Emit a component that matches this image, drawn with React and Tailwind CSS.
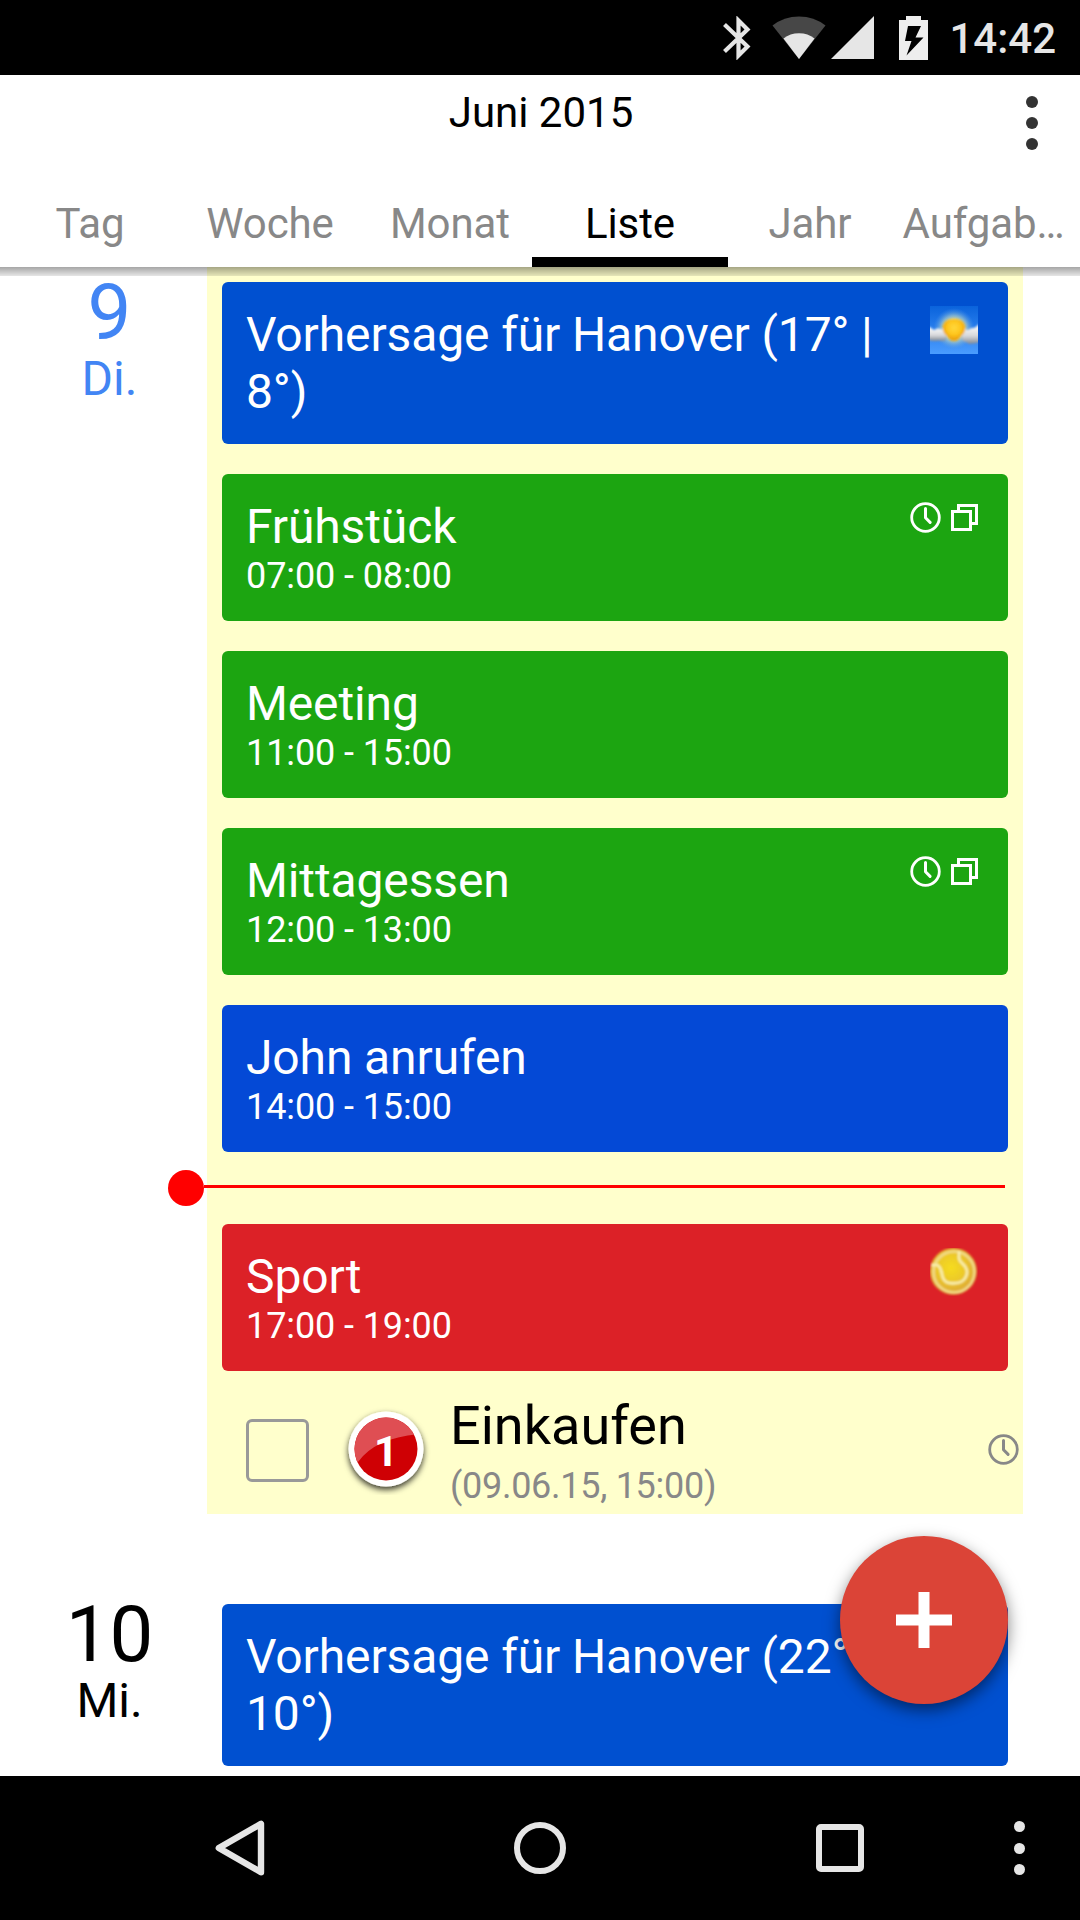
import clsx from "clsx";

const tabs = ["Tag", "Woche", "Monat", "Liste", "Jahr", "Aufgab…"];

const todayEvents = [
  { id: 1, title: "Vorhersage für Hanover (17° | 8°)", color: "bg-[#0050d0]", icon: "weather" },
  { id: 2, title: "Frühstück", time: "07:00 - 08:00", color: "bg-[#1ca511]", icon: "repeat" },
  { id: 3, title: "Meeting", time: "11:00 - 15:00", color: "bg-[#1ca511]" },
  { id: 4, title: "Mittagessen", time: "12:00 - 13:00", color: "bg-[#1ca511]", icon: "repeat" },
  { id: 5, title: "John anrufen", time: "14:00 - 15:00", color: "bg-[#0449d6]" },
];

const laterEvents = [
  { id: 6, title: "Sport", time: "17:00 - 19:00", color: "bg-[#dc2127]", icon: "tennis" },
];

const tomorrowEvents = [
  { id: 7, title: "Vorhersage für Hanover (22° | 10°)", color: "bg-[#0050d0]" },
];

const ClockIcon = ({ className }) => (
  <svg viewBox="0 0 31 31" className={clsx("size-[31px]", className)} fill="none" stroke="currentColor">
    <circle cx="15.5" cy="15.5" r="13.8" strokeWidth="2.8" />
    <path d="M15.5 6.5v9.3l4.6 4.6" strokeWidth="3" strokeLinecap="round" strokeLinejoin="round" />
  </svg>
);

const CopyIcon = () => (
  <svg viewBox="0 0 27 27" className="size-[27px]" fill="none" stroke="currentColor" strokeWidth="3">
    <path d="M1.5 7.5h18v18h-18z" />
    <path d="M7.5 7.5v-6h18v18h-6" />
  </svg>
);

const WeatherIcon = () => (
  <svg viewBox="0 0 48 48" className="size-12">
    <defs>
      <linearGradient id="sky" x1="0" y1="0" x2="0" y2="1">
        <stop offset="0" stopColor="#0a63dc" />
        <stop offset="1" stopColor="#4a9cff" />
      </linearGradient>
      <radialGradient id="glow">
        <stop offset="0.45" stopColor="#d8d8a0" />
        <stop offset="0.65" stopColor="#8fbcd0" stopOpacity="0.8" />
        <stop offset="1" stopColor="#3a8cf0" stopOpacity="0" />
      </radialGradient>
      <linearGradient id="cloud" x1="0" y1="0" x2="0" y2="1">
        <stop offset="0" stopColor="#ffffff" />
        <stop offset="0.6" stopColor="#d6d7da" />
        <stop offset="1" stopColor="#7d8794" />
      </linearGradient>
      <radialGradient id="sun" cy="0.4">
        <stop offset="0" stopColor="#ffd83c" />
        <stop offset="0.65" stopColor="#fec51c" />
        <stop offset="1" stopColor="#eda30e" />
      </radialGradient>
      <filter id="soft">
        <feGaussianBlur stdDeviation="0.8" />
      </filter>
      <clipPath id="frame">
        <path d="M0 0h48v48H0z" />
      </clipPath>
    </defs>
    <g clipPath="url(#frame)">
      <path d="M0 0h48v48H0z" fill="url(#sky)" />
      <circle cx="24" cy="23" r="21" fill="url(#glow)" />
      <g filter="url(#soft)">
        <path d="M-2 21c3 0 4 2 6 3 2-1 4-2 6-1 2 0 4 1 6 2v9c-4 2-7 0-9 1-3 0-6 0-9-1z" fill="url(#cloud)" />
        <path d="M50 18c-3 1-4 4-7 4-3 0-4 2-6 2-2-1-3 0-5 1v9c2 2 5 2 7 4 4 0 7-1 11-2z" fill="url(#cloud)" />
        <path d="M24 13c7 0 12 4 11 10 0 4-3 6-5 8-2 3-4 4-6 4s-4-1-6-4c-2-2-5-4-5-8-1-6 4-10 11-10z" fill="url(#sun)" />
      </g>
    </g>
  </svg>
);

const TennisIcon = () => (
  <svg viewBox="0 0 48 48" className="size-12">
    <defs>
      <radialGradient id="ball" cx="0.45" cy="0.42" r="0.58">
        <stop offset="0" stopColor="#f6dc1e" />
        <stop offset="0.5" stopColor="#ecc92a" />
        <stop offset="0.85" stopColor="#dfae34" />
        <stop offset="1" stopColor="#d9701c" />
      </radialGradient>
      <filter id="ballSoft">
        <feGaussianBlur stdDeviation="0.8" />
      </filter>
    </defs>
    <g filter="url(#ballSoft)">
      <circle cx="23.5" cy="23.5" r="23.5" fill="url(#ball)" />
      <circle cx="24" cy="24" r="20.5" fill="none" stroke="#f3dc86" strokeWidth="2.6" />
      <path
        d="M1 17h6c5 2 4 8 6 13 2 5 8 6 14 5 8-1 12-9 9-15-2-5-8-6-7-11V3"
        fill="none"
        stroke="#f9efae"
        strokeWidth="2.6"
      />
    </g>
  </svg>
);

const StatusBar = () => (
  <div className="flex h-[75px] shrink-0 items-center justify-end bg-black pr-6 text-[#e6e6e6]">
    <svg viewBox="0 0 28 44" className="mr-[21px] h-11 w-7" fill="none" stroke="currentColor" strokeWidth="4.2">
      <path d="M1.5 8.5l23 22-9 9V4.500l9 9L1.500 35.500" strokeMiterlimit="6" />
    </svg>
    <svg viewBox="0 0 54 43" className="mr-[5px] h-[43px] w-[54px]">
      <path d="M27 43L0.500 9.500Q12 0.500 27 0.500t26.500 9z" fill="#474747" />
      <path d="M27 43L11.500 22.500Q18 17.200 27 17.200t15.500 5.300z" fill="currentColor" />
    </svg>
    <svg viewBox="0 0 43 43" className="mr-[25px] size-[43px]">
      <path d="M43 0v43H0z" fill="currentColor" />
    </svg>
    <svg viewBox="0 0 29 44" className="mr-[21px] h-11 w-[29px]">
      <path
        d="M7 0h15v4h7v40H0V4h7zM9 10L6 25h6.500L7.500 39.500 24.500 21.500h-8L22 10z"
        fill="#eeeeee"
        fillRule="evenodd"
      />
    </svg>
    <span className="pt-[2px] text-[42px] leading-none font-medium">14:42</span>
  </div>
);

const Header = () => (
  <header className="relative z-10 flex h-48 shrink-0 flex-col bg-white">
    <div className="flex h-[90px] items-start">
      <div className="w-[62px]" />
      <h1 className="flex-1 pt-[13px] text-center text-[42px] leading-[49px]">Juni 2015</h1>
      <button className="flex w-[60px] flex-col gap-[9px] pt-[21px] pl-[6px]">
        <span className="size-3 rounded-full bg-[#333]" />
        <span className="size-3 rounded-full bg-[#333]" />
        <span className="size-3 rounded-full bg-[#333]" />
      </button>
    </div>
    <nav className="grid flex-1 grid-cols-6">
      {tabs.map((tab) => (
        <div
          key={tab}
          className={clsx(
            "flex flex-col justify-between pt-[34px] text-center text-[42px] leading-[49px] tracking-[-0.1px]",
            tab === "Liste" ? "text-black" : "text-[#888]",
            tab === "Aufgab…" && "pr-[13px]"
          )}
        >
          <span>{tab}</span>
          {tab === "Liste" && <span className="-mx-2 h-[10px] bg-black" />}
        </div>
      ))}
    </nav>
    <div className="absolute inset-x-0 top-full h-[9px] bg-gradient-to-b from-black/35 to-black/10" />
  </header>
);

const EventCard = ({ event }) => (
  <div className={clsx("flex justify-between rounded-md py-6 pr-[30px] pl-6 text-white", event.color)}>
    <div className="w-[640px]">
      <h3 className="text-[48px] leading-[57px] tracking-[-0.12px]">{event.title}</h3>
      {event.time && <p className="text-[36px] leading-[42px] tracking-[-0.1px]">{event.time}</p>}
    </div>
    {event.icon === "weather" && <WeatherIcon />}
    {event.icon === "tennis" && <TennisIcon />}
    {event.icon === "repeat" && (
      <div className="flex h-[38px] items-center gap-[10px]">
        <ClockIcon />
        <CopyIcon />
      </div>
    )}
  </div>
);

const DayLabel = ({ day, weekday, className }) => (
  <div className={clsx("w-[207px] shrink-0 pt-[7px] pl-[12px] text-center", className)}>
    <div className="text-[78px] leading-[78px]">{day}</div>
    <div className="text-[48px] leading-[54px]">{weekday}</div>
  </div>
);

const NowLine = () => (
  <div className="relative -mt-[30px] h-[72px] pt-[33px] pr-[3px]">
    <span className="absolute top-[18px] -left-[54px] size-9 rounded-full bg-[#ff0000]" />
    <div className="-ml-[18px] h-[3px] bg-[#ff0000]" />
  </div>
);

const PriorityBadge = () => (
  <svg viewBox="0 0 92 92" className="size-[92px]">
    <defs>
      <filter id="badgeShadow" x="-20%" y="-20%" width="140%" height="140%">
        <feDropShadow dx="0" dy="3" stdDeviation="3" floodColor="#000" floodOpacity="0.8" />
      </filter>
      <clipPath id="badgeClip">
        <circle cx="46" cy="46" r="31.500" />
      </clipPath>
    </defs>
    <circle cx="46" cy="46" r="37.500" fill="#fff" filter="url(#badgeShadow)" />
    <g clipPath="url(#badgeClip)">
      <path d="M10 10h72v72H10z" fill="#cf0004" />
      <path d="M10 10h72v21Q36 34 18 59l-8 8z" fill="#df4e53" />
    </g>
    <text x="46" y="63" textAnchor="middle" fill="#fff" className="text-[42px] font-bold">
      1
    </text>
  </svg>
);

const TaskRow = () => (
  <div className="flex h-[143px] items-start pl-[24px]">
    <div className="mt-[48px] h-[63px] w-[63px] rounded-md border-[3px] border-[#999]" />
    <div className="mt-[32px] ml-[31px]">
      <PriorityBadge />
    </div>
    <div className="mt-[23px] ml-[18px] flex-1">
      <h3 className="text-[54px] leading-[63px] text-black">Einkaufen</h3>
      <p className="mt-[8px] text-[36px] leading-[42px] tracking-[-0.28px] text-[#888]">(09.06.15, 15:00)</p>
    </div>
    <ClockIcon className="mt-[63px] -mr-[11px] text-[#888]" />
  </div>
);

const NavBar = () => (
  <footer className="flex h-36 shrink-0 items-center bg-black text-[#e6e6e6]">
    <svg viewBox="0 0 50 56" className="ml-[215px] h-14 w-[50px]" fill="none" stroke="currentColor">
      <path d="M46 3.800v48.400L3.800 28z" strokeWidth="6.400" strokeLinejoin="round" />
    </svg>
    <div className="ml-[249px] size-[52px] rounded-full border-[6px] border-current" />
    <div className="ml-[250px] size-12 rounded-[5px] border-[6px] border-current" />
    <div className="ml-[150px] flex flex-col gap-[10.5px]">
      <span className="size-[11px] rounded-full bg-current" />
      <span className="size-[11px] rounded-full bg-current" />
      <span className="size-[11px] rounded-full bg-current" />
    </div>
  </footer>
);

const App = () => {
  return (
    <div className="relative flex h-[1920px] w-[1080px] flex-col overflow-hidden bg-white font-[Roboto,sans-serif] text-black">
      <StatusBar />
      <Header />
      <main className="flex-1 overflow-hidden">
        <section className="flex">
          <DayLabel day="9" weekday="Di." className="text-[#4285f4]" />
          <div className="flex w-[816px] flex-col gap-[30px] bg-[#ffffcc] px-[15px] pt-[15px]">
            {todayEvents.map((event) => (
              <EventCard key={event.id} event={event} />
            ))}
            <NowLine />
            <div className="-mt-[30px]">
              {laterEvents.map((event) => (
                <EventCard key={event.id} event={event} />
              ))}
              <TaskRow />
            </div>
          </div>
        </section>
        <section className="mt-[75px] flex">
          <DayLabel day="10" weekday="Mi." />
          <div className="flex w-[816px] flex-col px-[15px] pt-[15px]">
            {tomorrowEvents.map((event) => (
              <EventCard key={event.id} event={event} />
            ))}
          </div>
        </section>
      </main>
      <NavBar />
      <button className="absolute right-[72px] bottom-[216px] flex size-[168px] items-center justify-center rounded-full bg-[#db4437] shadow-[0_6px_16px_rgba(0,0,0,0.5)]">
        <svg viewBox="0 0 56 56" className="size-14">
          <path d="M28 0v56M0 28h56" stroke="#fff" strokeWidth="11" />
        </svg>
      </button>
    </div>
  );
};

export default App;
